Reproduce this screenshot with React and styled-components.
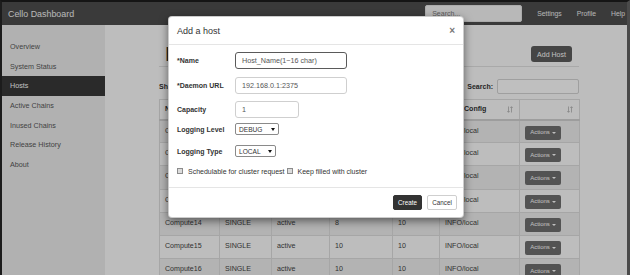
import React from "react";
import styled, { createGlobalStyle } from "styled-components";

const GlobalStyle = createGlobalStyle`
  html, body {
    margin: 0;
    padding: 0;
    background: #fff;
  }
  * {
    box-sizing: border-box;
  }
  body {
    font-family: "Liberation Sans", Arial, sans-serif;
  }
`;

const Frame = styled.div`
  position: relative;
  width: 630px;
  height: 275px;
  overflow: hidden;
  border-top: 2px solid #151515;
  border-left: 2px solid #1c1c1c;
  border-right: 3px solid #4a4a4a;
  display: flex;
  flex-direction: column;
  background: #fcfcfc;
`;

const Navbar = styled.div`
  height: 23px;
  flex: none;
  display: flex;
  align-items: center;
  background: #4e4e4e;
  padding: 0 2px 0 6px;
`;

const Brand = styled.div`
  font-size: 8.9px;
  color: #f4f4f4;
`;

const NavRight = styled.div`
  margin-left: auto;
  display: flex;
  align-items: center;
  gap: 15px;
`;

const NavSearch = styled.div`
  width: 97px;
  height: 17px;
  border: 1px solid #e4e4e4;
  border-radius: 2px;
  background: #f6f6f6;
  font-size: 7px;
  color: #7a7a7a;
  padding: 4px 0 0 6px;
  margin-right: 0;
`;

const NavLink = styled.span`
  font-size: 6.8px;
  color: #f0f0f0;
`;

const Body = styled.div`
  flex: 1;
  display: flex;
  min-height: 0;
`;

const Sidebar = styled.div`
  width: 103px;
  flex: none;
  background: #ededed;
  padding-top: 11.5px;
`;

const SideItem = styled.div`
  height: 19.7px;
  display: flex;
  align-items: center;
  padding-left: 8px;
  font-size: 7.2px;
  color: ${({ active }) => (active ? "#ffffff" : "#585858")};
  background: ${({ active }) => (active ? "#383838" : "transparent")};
`;

const Main = styled.div`
  flex: 1;
  background: #fcfcfc;
  padding: 21px 0 0 54px;
`;

const Content = styled.div`
  width: 420px;
`;

const PageHeader = styled.div`
  display: flex;
  align-items: center;
  justify-content: space-between;
  padding: 0 7px 4px 6px;
  border-bottom: 1px solid #e2e2e2;
`;

const Title = styled.h1`
  margin: 0;
  font-size: 20px;
  line-height: 16px;
  font-weight: 500;
  color: #333;
`;

const DarkButton = styled.button`
  font-family: inherit;
  width: 41px;
  height: 16px;
  padding: 0;
  border: none;
  border-radius: 3px;
  background: #5c5c5c;
  color: #fff;
  font-size: 7px;
`;

const Controls = styled.div`
  margin-top: 11px;
  height: 17px;
  display: flex;
  align-items: center;
  justify-content: space-between;
  font-size: 7px;
  font-weight: bold;
  color: #333;
`;

const SearchWrap = styled.div`
  display: flex;
  align-items: center;
  gap: 4px;
`;

const SmallInput = styled.div`
  width: ${({ w }) => w}px;
  height: 15px;
  border: 1px solid #d4d4d4;
  border-radius: 2px;
  background: #fff;
`;

const Table = styled.table`
  margin-top: 4px;
  width: 420px;
  border-collapse: collapse;
  table-layout: fixed;
  font-size: 7.1px;
  color: #444;
`;

const Th = styled.th`
  height: 20px;
  text-align: left;
  font-weight: bold;
  color: #333;
  padding: 0 0 0 ${({ pl }) => pl || 5}px;
  border: 1px solid #dedede;
  border-bottom: 2px solid #d2d2d2;
  position: relative;
`;

const SortIcon = styled.svg`
  position: absolute;
  right: 6px;
  top: 6px;
`;

const Tr = styled.tr`
  background: ${({ odd }) => (odd ? "#efefef" : "#fcfcfc")};
`;

const Td = styled.td`
  height: 23.2px;
  vertical-align: top;
  padding: 6px 0 0 5px;
  line-height: 9px;
  border: 1px solid #dedede;
  white-space: nowrap;
  overflow: hidden;
`;

const ActionsButton = styled.div`
  width: 36px;
  height: 14px;
  margin-top: -1px;
  border-radius: 2px;
  background: #6f6f6f;
  color: #fff;
  font-size: 6px;
  display: flex;
  align-items: center;
  justify-content: center;
  gap: 2px;
`;

const Caret = styled.span`
  display: inline-block;
  width: 0;
  height: 0;
  border-left: 2px solid transparent;
  border-right: 2px solid transparent;
  border-top: 2px solid currentColor;
`;

const Backdrop = styled.div`
  position: absolute;
  inset: 0;
  background: rgba(0, 0, 0, 0.25);
`;

const Modal = styled.div`
  position: absolute;
  left: 166px;
  top: 14px;
  width: 296px;
  background: #fff;
  border: 1px solid rgba(0, 0, 0, 0.2);
  border-radius: 4px;
  box-shadow: 0 3px 9px rgba(0, 0, 0, 0.5);
  color: #333;
`;

const ModalHeader = styled.div`
  height: 28px;
  display: flex;
  align-items: center;
  justify-content: space-between;
  padding: 0 8px 0 8px;
  border-bottom: 1px solid #e5e5e5;
`;

const ModalTitle = styled.div`
  font-size: 9px;
  color: #333;
`;

const Close = styled.span`
  font-size: 10px;
  font-weight: bold;
  color: #777;
  margin-top: -1px;
`;

const ModalBody = styled.div`
  padding: 7px 8px 7.5px 8px;
`;

const FormRow = styled.div`
  display: flex;
  align-items: center;
  height: 17px;
  margin-top: ${({ mt }) => mt || 0}px;
`;

const Label = styled.div`
  width: 58px;
  flex: none;
  font-size: 7px;
  font-weight: bold;
  color: #333;
`;

const TextInput = styled.div`
  width: ${({ w }) => w}px;
  height: 17px;
  border: ${({ focused }) => (focused ? "1.5px solid #5a5a5a" : "1px solid #cfcfcf")};
  border-radius: 3px;
  font-size: 7.2px;
  color: #555;
  padding-left: 6px;
  display: flex;
  align-items: center;
`;

const SelectBox = styled.div`
  width: ${({ w }) => w}px;
  height: 12px;
  border: 1px solid #8a8a8a;
  border-radius: 2px;
  display: flex;
  align-items: center;
  justify-content: space-between;
  padding: 0 3px 0 3px;
  font-size: 6.6px;
  color: #333;
`;

const SelectArrow = styled.span`
  width: 0;
  height: 0;
  border-left: 2px solid transparent;
  border-right: 2px solid transparent;
  border-top: 3px solid #111;
`;

const CheckBox = styled.span`
  width: 6px;
  height: 6px;
  flex: none;
  border: 1px solid #8c8c8c;
  background: #dcdcdc;
  margin-right: 5px;
`;

const CheckLabel = styled.span`
  font-size: 7px;
  color: #333;
  margin-right: 2px;
  white-space: nowrap;
`;

const ModalFooter = styled.div`
  height: 30px;
  border-top: 1px solid #e5e5e5;
  display: flex;
  align-items: center;
  justify-content: flex-end;
  gap: 5px;
  padding-right: 6px;
`;

const FooterButton = styled.button`
  font-family: inherit;
  height: 15px;
  width: ${({ w }) => w}px;
  padding: 0;
  border-radius: 2px;
  font-size: 6.3px;
  border: 1px solid ${({ primary }) => (primary ? "#333" : "#cfcfcf")};
  background: ${({ primary }) => (primary ? "#333" : "#fff")};
  color: ${({ primary }) => (primary ? "#fff" : "#333")};
`;

const sideItems = [
  "Overview",
  "System Status",
  "Hosts",
  "Active Chains",
  "Inused Chains",
  "Release History",
  "About",
];

const columns = [
  { title: "Name", width: 60 },
  { title: "Type", width: 52 },
  { title: "Status", width: 58 },
  { title: "Chains", width: 63 },
  { title: "Capacity", width: 47 },
  { title: "Log Config", width: 80, sort: true, pl: 9 },
  { title: "", width: 60, sort: true },
];

const rows = [
  ["Compute10", "SINGLE", "active", "10", "10", "INFO/local"],
  ["Compute11", "SINGLE", "active", "10", "10", "INFO/local"],
  ["Compute12", "SINGLE", "active", "10", "10", "INFO/local"],
  ["Compute13", "SINGLE", "active", "10", "10", "INFO/local"],
  ["Compute14", "SINGLE", "active", "8", "10", "INFO/local"],
  ["Compute15", "SINGLE", "active", "10", "10", "INFO/local"],
  ["Compute16", "SINGLE", "active", "10", "10", "INFO/local"],
];

const Sort = () => (
  <SortIcon width="6" height="7" viewBox="0 0 6 7">
    <path d="M1.5 0.5V6.2M0.3 5L1.5 6.3L2.7 5" stroke="#b0b0b0" strokeWidth="0.8" fill="none" />
    <path d="M4.5 6.5V0.8M3.3 2L4.5 0.7L5.7 2" stroke="#b0b0b0" strokeWidth="0.8" fill="none" />
  </SortIcon>
);

export default function App() {
  return (
    <>
      <GlobalStyle />
      <Frame>
        <Navbar>
          <Brand>Cello Dashboard</Brand>
          <NavRight>
            <NavSearch>Search...</NavSearch>
            <NavLink>Settings</NavLink>
            <NavLink>Profile</NavLink>
            <NavLink>Help</NavLink>
          </NavRight>
        </Navbar>
        <Body>
          <Sidebar>
            {sideItems.map((item) => (
              <SideItem key={item} active={item === "Hosts"}>
                {item}
              </SideItem>
            ))}
          </Sidebar>
          <Main>
            <Content>
              <PageHeader>
                <Title>Hosts</Title>
                <DarkButton>Add Host</DarkButton>
              </PageHeader>
              <Controls>
                <span>Show 10 entries</span>
                <SearchWrap>
                  <span>Search:</span>
                  <SmallInput w={82} />
                </SearchWrap>
              </Controls>
              <Table>
                <colgroup>
                  {columns.map((c, i) => (
                    <col key={i} style={{ width: c.width }} />
                  ))}
                </colgroup>
                <thead>
                  <tr>
                    {columns.map((c, i) => (
                      <Th key={i} pl={c.pl}>
                        {c.title}
                        {c.sort && <Sort />}
                      </Th>
                    ))}
                  </tr>
                </thead>
                <tbody>
                  {rows.map((r, i) => (
                    <Tr key={r[0]} odd={i % 2 === 0}>
                      {r.map((cell, j) => (
                        <Td key={j}>{cell}</Td>
                      ))}
                      <Td>
                        <ActionsButton>
                          Actions <Caret />
                        </ActionsButton>
                      </Td>
                    </Tr>
                  ))}
                </tbody>
              </Table>
            </Content>
          </Main>
        </Body>
        <Backdrop />
        <Modal>
          <ModalHeader>
            <ModalTitle>Add a host</ModalTitle>
            <Close>×</Close>
          </ModalHeader>
          <ModalBody>
            <FormRow>
              <Label>*Name</Label>
              <TextInput w={112} focused>Host_Name(1~16 char)</TextInput>
            </FormRow>
            <FormRow mt={8}>
              <Label>*Daemon URL</Label>
              <TextInput w={112}>192.168.0.1:2375</TextInput>
            </FormRow>
            <FormRow mt={7}>
              <Label>Capacity</Label>
              <TextInput w={64}>1</TextInput>
            </FormRow>
            <FormRow mt={2.5}>
              <Label>Logging Level</Label>
              <SelectBox w={44}>
                DEBUG <SelectArrow />
              </SelectBox>
            </FormRow>
            <FormRow mt={5}>
              <Label>Logging Type</Label>
              <SelectBox w={41}>
                LOCAL <SelectArrow />
              </SelectBox>
            </FormRow>
            <FormRow mt={3}>
              <CheckBox />
              <CheckLabel>Schedulable for cluster request</CheckLabel>
              <CheckBox />
              <CheckLabel>Keep filled with cluster</CheckLabel>
            </FormRow>
          </ModalBody>
          <ModalFooter>
            <FooterButton primary w={29}>Create</FooterButton>
            <FooterButton w={30}>Cancel</FooterButton>
          </ModalFooter>
        </Modal>
      </Frame>
    </>
  );
}
